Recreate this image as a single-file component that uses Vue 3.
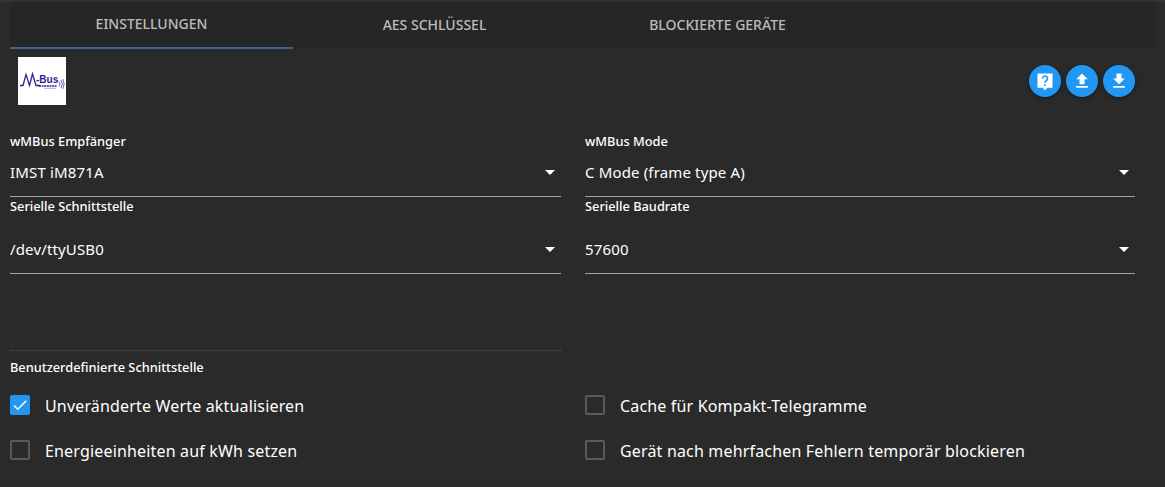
<script setup>
const tabs = [
  { label: 'EINSTELLUNGEN', active: true },
  { label: 'AES SCHLÜSSEL' },
  { label: 'BLOCKIERTE GERÄTE' },
]
const selects = [
  { label: 'wMBus Empfänger', value: 'IMST iM871A', cls: 'first' },
  { label: 'wMBus Mode', value: 'C Mode (frame type A)', cls: 'first' },
  { label: 'Serielle Schnittstelle', value: '/dev/ttyUSB0', cls: 'second' },
  { label: 'Serielle Baudrate', value: '57600', cls: 'second' },
]
const checks = [
  { label: 'Unveränderte Werte aktualisieren', on: true },
  { label: 'Cache für Kompakt-Telegramme' },
  { label: 'Energieeinheiten auf kWh setzen' },
  { label: 'Gerät nach mehrfachen Fehlern temporär blockieren' },
]
</script>

<template>
  <div class="page">
    <div class="tabs">
      <div v-for="t in tabs" :key="t.label" class="tab" :class="{ active: t.active }">{{ t.label }}</div>
    </div>
    <div class="toolbar">
      <div class="logo">
        <svg width="48" height="48" viewBox="0 0 48 48">
          <path d="M2 28.500H5L8 17.500L11.500 28.500L14.500 17L18 28.500H22" fill="none" stroke="#2e2490" stroke-width="1.300"/>
          <text x="18" y="26" class="bus">-Bus</text>
          <path d="M21 29H39" stroke="#2e2490" stroke-width="1.300" stroke-dasharray="2 .6"/>
          <path d="M26 31.300H38" stroke="#8c88c0" stroke-width=".7"/>
          <path d="M41 24.500Q43 27 41 29.500M43 23Q45.500 27 43 31M44.800 22Q47.500 27 44.800 32" fill="none" stroke="#4a44a0" stroke-width=".8"/>
        </svg>
      </div>
      <div class="actions">
        <button class="fab">
          <svg width="24" height="24" viewBox="0 0 24 24"><path fill="#fff" d="M3 3h18v17h-6l-3 3-3-3H3z"/><path fill="none" stroke="#2196f3" stroke-width="2" d="M9 9a3 3 0 1 1 4.700 2.500c-1.100.8-1.700 1.300-1.700 2.500"/><rect x="11" y="16" width="2" height="2" fill="#2196f3"/></svg>
        </button>
        <button class="fab">
          <svg width="24" height="24" viewBox="0 0 24 24"><path fill="#fff" d="M9 16h6v-6h4l-7-7-7 7h4zm-4 2h14v2H5z"/></svg>
        </button>
        <button class="fab">
          <svg width="24" height="24" viewBox="0 0 24 24"><path fill="#fff" d="M19 9h-4V3H9v6H5l7 7 7-7zM5 18v2h14v-2H5z"/></svg>
        </button>
      </div>
    </div>
    <div class="grid">
      <div v-for="s in selects" :key="s.label" class="select" :class="s.cls">
        <div class="label">{{ s.label }}</div>
        <div class="value">
          <span>{{ s.value }}</span>
          <i class="arrow"></i>
        </div>
      </div>
    </div>
    <div class="custom">
      <div class="label">Benutzerdefinierte Schnittstelle</div>
    </div>
    <div class="checks">
      <label v-for="c in checks" :key="c.label" class="check">
        <span class="box" :class="{ on: c.on }">
          <svg v-if="c.on" width="20" height="20" viewBox="0 0 24 24"><path fill="#fff" d="M9 16.200 4.800 12l-1.400 1.400L9 19 21 7l-1.400-1.400z"/></svg>
        </span>
        <span class="check-text">{{ c.label }}</span>
      </label>
    </div>
  </div>
</template>

<style>
html, body { margin: 0; background: #2a2a2a; }
</style>

<style scoped>
.page {
  height: 487px;
  box-sizing: border-box;
  overflow: hidden;
  background: #2a2a2a;
  border-top: 2px solid #333;
  padding: 0 30px 0 10px;
  color: #fff;
  font-family: "Noto Sans", sans-serif;
}
.tabs {
  display: flex;
  margin-right: -20px;
  height: 47px;
  background: #262626;
}
.tab {
  width: 283px;
  box-sizing: border-box;
  display: flex;
  align-items: center;
  justify-content: center;
  font-size: 14px;
  font-weight: 500;
  color: rgba(255, 255, 255, .7);
  padding-bottom: 2px;
}
.tab.active { border-bottom: 2px solid #3f6587; }
.toolbar {
  display: flex;
  justify-content: space-between;
  align-items: flex-start;
  padding: 8px 0 0 8px;
  height: 76px;
}
.logo {
  width: 48px;
  height: 48px;
  background: #fff;
}
.logo svg { display: block; }
.bus {
  fill: #2e2490;
  font: 700 10px "Liberation Sans", sans-serif;
}
.actions { display: flex; gap: 5px; padding-top: 8px; }
.fab {
  width: 32px;
  height: 32px;
  padding: 0;
  border: 0;
  border-radius: 50%;
  background: #2196f3;
  display: flex;
  align-items: center;
  justify-content: center;
  box-shadow: 0 1px 4px rgba(0, 0, 0, .4);
}
.fab svg { width: 20px; height: 20px; }
.grid {
  display: grid;
  grid-template-columns: 551px 550px;
  column-gap: 24px;
}
.select { border-bottom: 1px solid #a4a4a4; }
.select.first { height: 63px; }
.select.second { height: 76px; }
.label {
  font-size: 12.800px;
  line-height: 16px;
  font-weight: 500;
  color: #fff;
}
.select.second .label { margin-top: 1px; }
.select .value {
  display: flex;
  align-items: center;
  justify-content: space-between;
  font-size: 15px;
  letter-spacing: .15px;
  color: #fff;
  height: 32px;
  margin-top: 7px;
  padding-right: 6px;
}
.select.second .value { margin-top: 19px; }
.arrow {
  width: 0;
  height: 0;
  border-left: 5px solid transparent;
  border-right: 5px solid transparent;
  border-top: 5px solid #fff;
}
.custom {
  width: 551px;
  margin-top: 76px;
  border-top: 1px dotted #555;
  padding-top: 8px;
}
.checks {
  display: grid;
  grid-template-columns: 551px 550px;
  column-gap: 24px;
  row-gap: 21px;
  margin-top: 18px;
}
.check {
  display: flex;
  align-items: center;
  gap: 15px;
  height: 24px;
  font-size: 16px;
  letter-spacing: .17px;
  color: #fff;
}
.check-text { padding-top: 1px; }
.box {
  width: 20px;
  height: 20px;
  box-sizing: border-box;
  border: 2px solid #5a5a5a;
  border-radius: 2px;
  display: flex;
  align-items: center;
  justify-content: center;
}
.box.on { background: #2196f3; border-color: #2196f3; }
.box.on svg { width: 18px; height: 18px; flex: none; }
</style>
